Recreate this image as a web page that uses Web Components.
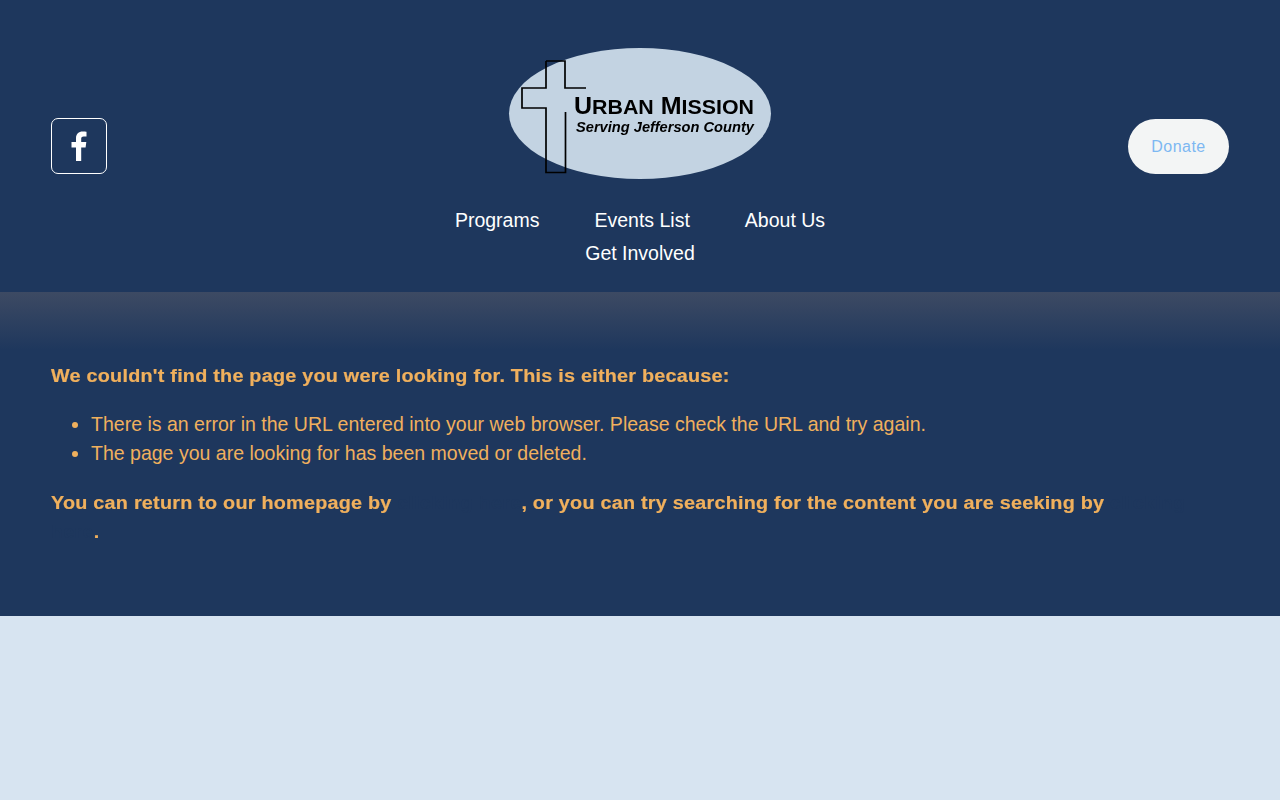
<!DOCTYPE html>
<html lang="en">
<head>
<meta charset="utf-8">
<title>Urban Mission</title>
<style>
html, body { margin: 0; padding: 0; }
body { background: #d7e4f1; font-family: "Liberation Sans", Arial, sans-serif; min-height: 800px; }
</style>
</head>
<body>
<site-header></site-header>
<error-section>
  <strong-line>We couldn't find the page you were looking for. This is either because:</strong-line>
  <ul slot="list">
    <li>There is an error in the URL entered into your web browser. Please check the URL and try again.</li>
    <li>The page you are looking for has been moved or deleted.</li>
  </ul>
  <strong-line>You can return to our homepage by <hidden-link>clicking here</hidden-link>, or you can try searching for the content you are seeking by <hidden-link>clicking</hidden-link> <hidden-link>here</hidden-link>.</strong-line>
</error-section>

<template id="logo-tpl">
  <style>
    :host { display: block; width: 264px; height: 133px; }
    svg { display: block; }
    .blur { filter: blur(.5px); }
    text { font-family: "Liberation Sans", Arial, sans-serif; fill: #000; }
  </style>
  <svg width="264" height="133" viewBox="0 0 264 133">
    <ellipse cx="132" cy="65.500" rx="131" ry="65.500" fill="#c3d3e2"/>
    <g class="blur">
      <path d="M38 13H57V40H78M38 13V40H14V60H38V124.500H57.500V64" fill="none" stroke="#000" stroke-width="1.700"/>
      <text x="66" y="66" font-size="24" font-weight="700" textLength="180" lengthAdjust="spacingAndGlyphs">U<tspan font-size="20.500">RBAN</tspan> M<tspan font-size="20.500">ISSION</tspan></text>
      <text x="68" y="84" font-size="14.500" font-weight="700" font-style="italic" textLength="178" lengthAdjust="spacingAndGlyphs" fill="#222">Serving Jefferson County</text>
    </g>
  </svg>
</template>

<script>
class UmLogo extends HTMLElement {
  connectedCallback() {
    let root = this.attachShadow({ mode: 'open' });
    root.appendChild(document.getElementById('logo-tpl').content.cloneNode(true));
  }
}
customElements.define('um-logo', UmLogo);

class SocialIcon extends HTMLElement {
  connectedCallback() {
    this.attachShadow({ mode: 'open' }).innerHTML = `
      <style>
        :host { display: flex; align-items: center; justify-content: center; box-sizing: border-box; width: 56px; height: 56px; border: 1px solid #fff; border-radius: 7px; }
        svg { display: block; }
      </style>
      <svg width="16" height="30" viewBox="0 0 16 30"><path fill="#fff" d="M5 30V16.500H.500V11H5V7.500C5 2.800 7.700.500 11.700.500 13.400.500 15 .700 15.500.800V5.500H12.800C10.500 5.500 10.200 6.600 10.200 8.100V11H15.300L14.600 16.500H10.200V30Z"/></svg>`;
  }
}
customElements.define('social-icon', SocialIcon);

class DonateButton extends HTMLElement {
  connectedCallback() {
    this.attachShadow({ mode: 'open' }).innerHTML = `
      <style>
        :host { display: flex; align-items: center; justify-content: center; box-sizing: border-box; padding-top: 1px; width: 101px; height: 55px; border-radius: 28px; background: #f3f5f5; color: #7db8f2; font-size: 16px; letter-spacing: .45px; }
      </style>
      <slot></slot>`;
  }
}
customElements.define('donate-button', DonateButton);

class MainNav extends HTMLElement {
  connectedCallback() {
    this.attachShadow({ mode: 'open' }).innerHTML = `
      <style>
        :host { display: flex; flex-wrap: wrap; justify-content: center; width: 400px; color: #fff; font-size: 19.500px; line-height: 33px; column-gap: 55px; }
        span { white-space: nowrap; }
      </style>
      <span>Programs</span><span>Events List</span><span>About Us</span><span>Get Involved</span>`;
  }
}
customElements.define('main-nav', MainNav);

class SiteHeader extends HTMLElement {
  connectedCallback() {
    this.attachShadow({ mode: 'open' }).innerHTML = `
      <style>
        :host { display: block; box-sizing: border-box; height: 292px; background: #1e375d; padding: 48px 51px 0; }
        .top { display: grid; grid-template-columns: 1fr auto 1fr; }
        .left { display: flex; align-items: center; padding-top: 70px; height: 56px; }
        .right { display: flex; align-items: center; justify-content: flex-end; padding-top: 70px; height: 56px; }
        .nav { display: flex; justify-content: center; margin-top: 23px; }
      </style>
      <div class="top">
        <div class="left"><social-icon></social-icon></div>
        <div class="mid"><um-logo></um-logo></div>
        <div class="right"><donate-button>Donate</donate-button></div>
      </div>
      <div class="nav"><main-nav></main-nav></div>`;
  }
}
customElements.define('site-header', SiteHeader);

// the heading font of the original is wider than Liberation Sans Bold, so stretch it
class StrongLine extends HTMLElement {
  connectedCallback() {
    this.attachShadow({ mode: 'open' }).innerHTML = `
      <style>
        :host { display: block; box-sizing: border-box; padding-top: 1px; width: calc(100% / 1.1); transform: scaleX(1.1); transform-origin: 0 0; font-size: 18px; line-height: 29px; font-weight: 700; letter-spacing: .21px; -webkit-text-stroke: .2px #f0b05d; color: #f0b05d; }
      </style>
      <slot></slot>`;
  }
}
customElements.define('strong-line', StrongLine);

class HiddenLink extends HTMLElement {
  connectedCallback() {
    this.attachShadow({ mode: 'open' }).innerHTML = `
      <style>:host { color: #1e375d; -webkit-text-stroke: 0; }</style>
      <slot></slot>`;
  }
}
customElements.define('hidden-link', HiddenLink);

class ErrorSection extends HTMLElement {
  connectedCallback() {
    this.attachShadow({ mode: 'open' }).innerHTML = `
      <style>
        :host { display: block; box-sizing: border-box; height: 324px; padding: 69px 51px 0; color: #f0b05d; background: linear-gradient(#3d4a63 0, #1e375d 58px); }
        .list { margin: 19px 0 20px; }
        ::slotted(ul) { margin: 0; padding: 0 0 0 40px; font-size: 19.530px; line-height: 29px; }
      </style>
      <slot name="first"></slot>
      <div class="list"><slot name="list"></slot></div>
      <slot></slot>`;
    this.firstElementChild.slot = 'first';
  }
}
customElements.define('error-section', ErrorSection);
</script>
</body>
</html>
